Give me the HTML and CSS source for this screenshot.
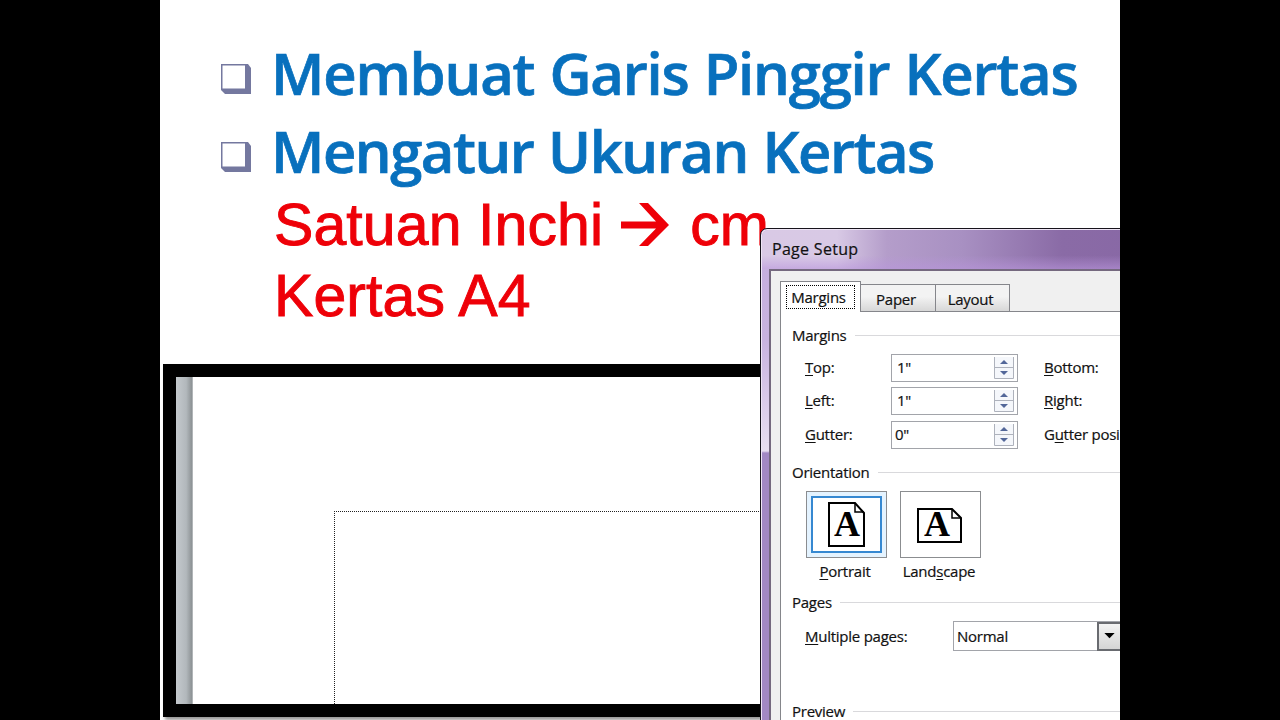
FILE: index.html
```
<!DOCTYPE html>
<html lang="id">
<head>
  <meta charset="UTF-8">
  <meta name="viewport" content="width=device-width, initial-scale=1.0">
  <title>Page Setup</title>
  <link rel="stylesheet" href="styles.css">
</head>
<body>
  <div class="slide">
    <ul class="topics">
      <li class="topic">
        <svg class="bullet" width="30" height="30" viewBox="0 0 30 30"><path d="M0 0H27L30 4V30H4L0 26Z" fill="#74789f"/><path d="M1.5 1.5H24V24.5H1.5Z" fill="#fff"/></svg>
        <span class="topic-one">Membuat Garis Pinggir Kertas</span>
      </li>
      <li class="topic">
        <svg class="bullet" width="30" height="30" viewBox="0 0 30 30"><path d="M0 0H27L30 4V30H4L0 26Z" fill="#74789f"/><path d="M1.5 1.5H24V24.5H1.5Z" fill="#fff"/></svg>
        <span class="topic-two">Mengatur Ukuran Kertas</span>
      </li>
      <li class="note">
        <span>Satuan Inchi</span>
        <svg class="arrow" width="48" height="44" viewBox="0 0 48 44"><path d="M0 18.5H35L18 0H27L48 22L27 43H18L35 25.5H0Z" fill="#ee0008"/></svg>
        <span>cm</span>
      </li>
      <li class="note">Kertas A4</li>
    </ul>

    <div class="document">
      <div class="ruler"></div>
      <div class="sheet"><div class="text-area"></div></div>
    </div>

    <div class="dialog">
      <div class="title-bar">Page Setup</div>
      <div class="panel">
        <div class="tabs">
          <div class="tab active"><span>Margins</span></div>
          <div class="tab">Paper</div>
          <div class="tab last">Layout</div>
          <div class="tab-line"></div>
        </div>
        <div class="tab-page">
          <div class="group-title">Margins</div>
          <div class="fields">
            <div class="field">
              <label><u>T</u>op:</label>
              <div class="spinner"><span>1"</span><svg width="20" height="22" viewBox="0 0 20 22"><path d="M.5 0V21.5H19.5V0M0 10.5H20" fill="#f5f7fb" stroke="#aeb2bc"/><path d="M6 7L10 3L14 7ZM6 14L10 18L14 14Z" fill="#536799"/></svg></div>
              <label><u>B</u>ottom:</label>
            </div>
            <div class="field">
              <label><u>L</u>eft:</label>
              <div class="spinner"><span>1"</span><svg width="20" height="22" viewBox="0 0 20 22"><path d="M.5 0V21.5H19.5V0M0 10.5H20" fill="#f5f7fb" stroke="#aeb2bc"/><path d="M6 7L10 3L14 7ZM6 14L10 18L14 14Z" fill="#536799"/></svg></div>
              <label><u>R</u>ight:</label>
            </div>
            <div class="field last-field">
              <label><u>G</u>utter:</label>
              <div class="spinner gutter"><span>0"</span><svg width="20" height="22" viewBox="0 0 20 22"><path d="M.5 0V21.5H19.5V0M0 10.5H20" fill="#f5f7fb" stroke="#aeb2bc"/><path d="M6 7L10 3L14 7ZM6 14L10 18L14 14Z" fill="#536799"/></svg></div>
              <label>G<u>u</u>tter posi</label>
            </div>
          </div>

          <div class="group-title">Orientation</div>
          <div class="orientations">
            <div class="orientation">
              <div class="choice selected">
                <svg width="72" height="60" viewBox="0 0 72 60"><path d="M18 8H44L53 18V51H18Z" fill="#fff" stroke="#000" stroke-width="2"/><path d="M44 8V17H53" fill="none" stroke="#000" stroke-width="1.5"/><text x="36" y="41" class="letter">A</text></svg>
              </div>
              <span><u>P</u>ortrait</span>
            </div>
            <div class="orientation">
              <div class="choice">
                <svg width="72" height="60" viewBox="0 0 72 60"><path d="M13 14H47L56 23V47H13Z" fill="#fff" stroke="#000" stroke-width="2"/><path d="M47 14V23H56" fill="none" stroke="#000" stroke-width="1.5"/><text x="32" y="41" class="letter">A</text></svg>
              </div>
              <span>Land<u>s</u>cape</span>
            </div>
          </div>

          <div class="group-title">Pages</div>
          <div class="pages">
            <label><u>M</u>ultiple pages:</label>
            <div class="select"><span>Normal</span><div class="select-button"><svg width="11" height="6" viewBox="0 0 12 7"><path d="M0 0H12L6 6Z"/></svg></div></div>
          </div>

          <div class="group-title preview">Preview</div>
        </div>
      </div>
    </div>
  </div>
</body>
</html>
```
FILE: styles.css
```
* {
  box-sizing: border-box;
}
body {
  margin: 0;
  background: #000;
  overflow: hidden;
}
u {
  text-underline-offset: 2px;
  text-decoration-thickness: 1px;
}
.slide {
  position: relative;
  width: 960px;
  height: 720px;
  margin: 0 auto;
  background: #fff;
  overflow: hidden;
}
.topics {
  list-style: none;
  margin: 0;
  padding: 33px 0 0 61px;
  height: 364px;
  white-space: nowrap;
}
.topic {
  display: flex;
  align-items: center;
  gap: 20px;
  height: 78px;
  font: 600 58px "Trebuchet MS", "Open Sans", sans-serif;
  color: #0870bd;
  -webkit-text-stroke: 0.7px #0870bd;
}
.bullet {
  margin-top: 14px;
}
.topic-one {
  letter-spacing: -1.2px;
  word-spacing: 1.2px;
}
.topic-two {
  letter-spacing: -1.5px;
  word-spacing: 1.2px;
}
.note {
  display: flex;
  align-items: center;
  height: 71px;
  padding-left: 53px;
  font: 59px "Liberation Sans", Arial, sans-serif;
  letter-spacing: 0.1px;
  color: #ee0008;
  -webkit-text-stroke: 0.9px #ee0008;
}
.arrow {
  margin: 0 21px 0 18px;
}

.document {
  display: flex;
  width: 797px;
  height: 353px;
  margin-left: 3px;
  border: 13px solid #000;
  box-shadow: 2px 3px 3px #999;
}
.ruler {
  width: 17px;
  background: linear-gradient(to right, #c4c9cd, #b2b8bc 60%, #8c9194 94%, #d5d8da);
}
.sheet {
  flex: 1;
  padding: 134px 0 0 141px;
}
.text-area {
  height: 100%;
  border-top: 1px dotted #222;
  border-left: 1px dotted #222;
}

.dialog {
  position: absolute;
  left: 600px;
  top: 228px;
  width: 480px;
  height: 560px;
  padding: 1px 8px 0;
  border: 1px solid #17131c;
  border-radius: 7px 0 0 0;
  background: linear-gradient(to bottom, #c5addd 0, #c8b3df 110px, #e8def0 222px, #a288c3 224px);
  box-shadow: inset 1px 1px 0 #eee5f5;
  font: 15px "Open Sans", sans-serif;
  letter-spacing: -0.25px;
  color: #111;
  -webkit-text-stroke: 0.2px #111;
  white-space: nowrap;
}
.title-bar {
  height: 39px;
  margin: 0 -7px;
  padding: 0 0 0 10px;
  font-size: 16px;
  letter-spacing: 0.3px;
  line-height: 39px;
  border-radius: 6px 0 0 0;
  background: linear-gradient(to bottom, transparent 65%, #b995dc99), linear-gradient(to right, #d9c9e5 0, #d8c9e5 75px, #b49dca 125px, #a890c2 200px, #8a6ba6 300px, #8664a4);
}
.panel {
  height: 510px;
  padding: 10px 0 0 9px;
  border: 2px solid #75697f;
  border-right: 0;
  background: #f0f0f0;
}
.tabs {
  display: flex;
  align-items: flex-end;
  height: 31px;
}
.tab {
  width: 75px;
  height: 28px;
  padding-right: 4px;
  border: 1px solid #85868b;
  border-left: 0;
  background: linear-gradient(#f3f3f3 45%, #d7d7d7);
  text-align: center;
  line-height: 28px;
}
.tab.last {
  width: 74px;
}
.tab.active {
  width: 81px;
  height: 31px;
  padding: 3px 5px;
  border-left: 1px solid #85868b;
  border-bottom: 0;
  background: #fff;
}
.tab.active span {
  display: block;
  width: 69px;
  height: 24px;
  padding-right: 4px;
  border: 1px dotted #000;
  line-height: 23px;
}
.tab-line {
  flex: 1;
  border-bottom: 1px solid #85868b;
}
.tab-page {
  height: 450px;
  padding: 12px 0 0 11px;
  border-left: 1px solid #85868b;
  background: #fff;
}
.group-title {
  display: flex;
  align-items: center;
  gap: 8px;
  height: 22px;
}
.group-title::after {
  content: "";
  flex: 1;
  height: 1px;
  background: #d9d9dc;
}
.fields {
  display: grid;
  gap: 5px;
  height: 115px;
  padding: 8px 0 0 13px;
  align-content: start;
}
.field {
  display: grid;
  grid-template-columns: 86px 153px auto;
  align-items: center;
}
.field label,
.spinner span {
  padding-bottom: 2px;
}
.last-field {
  margin-top: 1px;
}
.spinner {
  display: flex;
  align-items: center;
  justify-content: space-between;
  width: 127px;
  height: 28px;
  padding: 0 3px 0 5px;
  border: 1px solid #a2a4aa;
}
.gutter {
  padding-left: 3px;
}
.orientations {
  display: flex;
  gap: 13px;
  height: 108px;
  padding: 8px 0 0 14px;
}
.orientation {
  display: flex;
  flex-direction: column;
  align-items: center;
  width: 81px;
  gap: 3px;
}
.orientation span {
  margin-right: 3px;
}
.choice {
  display: flex;
  align-items: center;
  justify-content: center;
  width: 81px;
  height: 67px;
  border: 1px solid #8b8d90;
}
.choice.selected {
  background: #fff;
  box-shadow: inset 0 0 0 4px #e4f3ff, inset 0 0 0 6px #3588d1;
}
.letter {
  font: bold 36px "Liberation Serif", serif;
  letter-spacing: 0;
  text-anchor: middle;
  -webkit-text-stroke: 0;
}
.pages {
  display: flex;
  justify-content: space-between;
  align-items: flex-start;
  width: 331px;
  height: 88px;
  padding: 8px 0 0 13px;
}
.pages label {
  line-height: 30px;
}
.select {
  display: flex;
  justify-content: space-between;
  align-items: center;
  width: 170px;
  height: 30px;
  padding-left: 3px;
  border: 1px solid #a2a4aa;
}
.select-button {
  display: grid;
  place-items: center;
  width: 25px;
  height: 29px;
  border: 2px solid #696b70;
  background: linear-gradient(#f3f3f3, #d4d4d4);
}
.preview {
  height: 20px;
  line-height: 18px;
}
```
